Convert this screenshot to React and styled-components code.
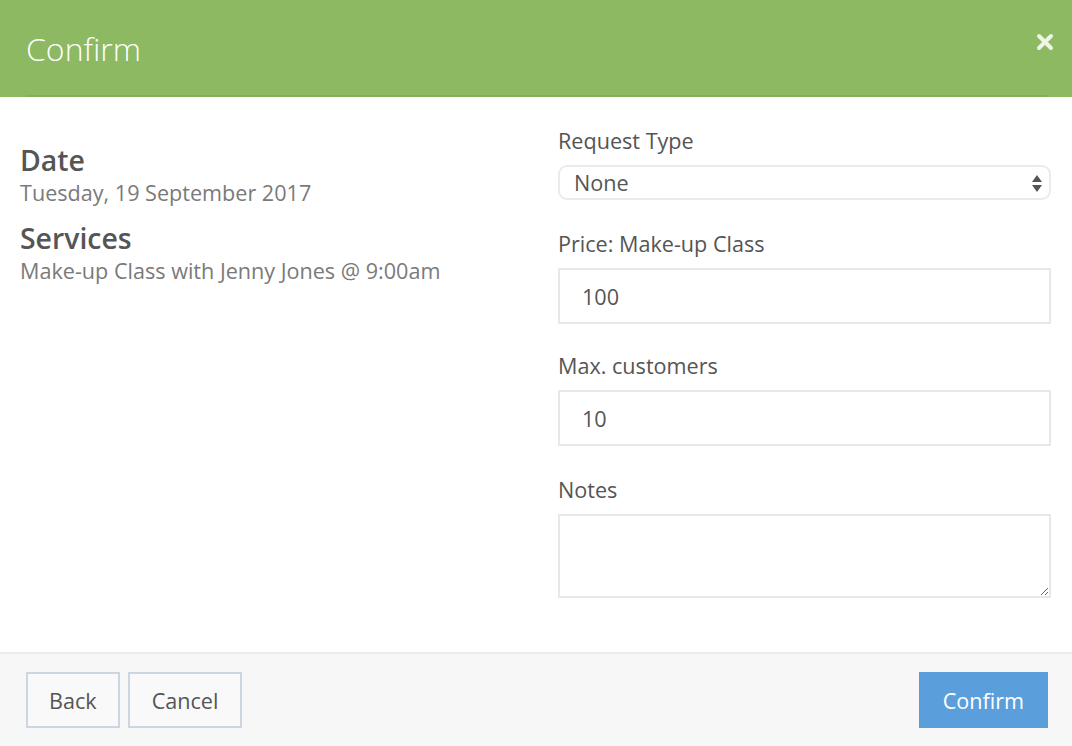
import React from "react";
import styled, { createGlobalStyle } from "styled-components";

const GlobalStyle = createGlobalStyle`
  html, body {
    margin: 0;
    padding: 0;
    background: #ffffff;
    font-family: "Open Sans", "Noto Sans", sans-serif;
  }
  * {
    box-sizing: border-box;
  }
`;

const Modal = styled.div`
  width: 1072px;
  height: 746px;
  display: flex;
  flex-direction: column;
  background: #ffffff;
  overflow: hidden;
`;

const Header = styled.div`
  background-color: #8cb962;
  height: 97px;
  padding: 0 24px 0 26px;
  position: relative;
`;

const HeaderInner = styled.div`
  height: 97px;
  display: flex;
  align-items: center;
  border-bottom: 2px solid #84b05b;
`;

const Title = styled.h1`
  margin: 0;
  font-size: 32px;
  font-weight: 300;
  color: #ffffff;
  padding-top: 1px;
`;

const CloseButton = styled.button`
  position: absolute;
  top: 32px;
  right: 17px;
  width: 20px;
  height: 20px;
  border: none;
  padding: 0;
  background: transparent;
  cursor: pointer;
  display: flex;
  align-items: center;
  justify-content: center;
`;

const Body = styled.div`
  flex: 1;
  display: grid;
  grid-template-columns: 1fr 493px;
  column-gap: 20px;
  padding: 31px 21px 0 20px;
`;

const Summary = styled.div`
  padding-top: 15px;
`;

const SummaryTitle = styled.h3`
  margin: 0;
  font-size: 28.4px;
  font-weight: 600;
  line-height: 34px;
  color: #555555;
`;

const SummaryText = styled.p`
  margin: 0 0 13px;
  font-size: 21.6px;
  line-height: 31px;
  color: #7a7a7a;
`;

const Field = styled.div`
  margin-bottom: ${(p) => p.$gap ?? 31}px;
`;

const Label = styled.label`
  display: block;
  font-size: 21.6px;
  line-height: 26px;
  color: #555555;
  margin-bottom: 11px;
`;

const SelectWrap = styled.div`
  position: relative;
`;

const Select = styled.select`
  appearance: none;
  -webkit-appearance: none;
  width: 100%;
  height: 35px;
  border: 2px solid #ebebeb;
  border-radius: 9px;
  background: #ffffff;
  padding: 0 14px;
  font-family: "Open Sans", sans-serif;
  font-size: 21.6px;
  color: #555555;
  outline: none;
`;

const Arrows = styled.svg`
  position: absolute;
  right: 8px;
  top: 9px;
  pointer-events: none;
`;

const Input = styled.input`
  width: 100%;
  height: 56px;
  border: 2px solid #e8e8e8;
  background: #ffffff;
  padding: 0 22px;
  font-family: "Open Sans", sans-serif;
  font-size: 21.6px;
  color: #555555;
  outline: none;
`;

const TextArea = styled.textarea`
  display: block;
  width: 100%;
  height: 84px;
  border: 2px solid #e8e8e8;
  background: #ffffff;
  padding: 12px 22px;
  font-family: "Open Sans", sans-serif;
  font-size: 21.6px;
  color: #555555;
  outline: none;
`;

const Footer = styled.div`
  height: 94px;
  border-top: 2px solid #ebebeb;
  background: #f7f7f7;
  display: flex;
  align-items: flex-start;
  justify-content: space-between;
  padding: 18px 24px 0 26px;
`;

const ButtonGroup = styled.div`
  display: flex;
  gap: 8px;
`;

const Button = styled.button`
  height: 56px;
  padding: 0 ${(p) => p.$pad || 21}px;
  font-family: "Open Sans", sans-serif;
  font-size: 21.6px;
  cursor: pointer;
  border: 2px solid ${(p) => (p.$primary ? "#5a9fdc" : "#ccd6e3")};
  background: ${(p) => (p.$primary ? "#5a9fdc" : "#f9f9f9")};
  color: ${(p) => (p.$primary ? "#ffffff" : "#555555")};
`;

const App = () => {
  return (
    <Modal>
      <GlobalStyle />
      <Header>
        <HeaderInner>
          <Title>Confirm</Title>
        </HeaderInner>
        <CloseButton aria-label="Close">
          <svg width="18" height="18" viewBox="0 0 18 18">
            <path
              d="M3 3 L15 15 M15 3 L3 15"
              stroke="#eef5e8"
              strokeWidth="4"
              strokeLinecap="round"
            />
          </svg>
        </CloseButton>
      </Header>
      <Body>
        <Summary>
          <SummaryTitle>Date</SummaryTitle>
          <SummaryText>Tuesday, 19 September 2017</SummaryText>
          <SummaryTitle>Services</SummaryTitle>
          <SummaryText>Make-up Class with Jenny Jones @ 9:00am</SummaryText>
        </Summary>
        <div>
          <Field>
            <Label>Request Type</Label>
            <SelectWrap>
              <Select defaultValue="none">
                <option value="none">None</option>
              </Select>
              <Arrows width="12" height="18" viewBox="0 0 12 18">
                <path d="M6 1 L11 8 L1 8 Z" fill="#555555" />
                <path d="M1 11 L11 11 L6 18 Z" fill="#555555" />
              </Arrows>
            </SelectWrap>
          </Field>
          <Field $gap={29}>
            <Label>Price: Make-up Class</Label>
            <Input defaultValue="100" />
          </Field>
          <Field $gap={31}>
            <Label>Max. customers</Label>
            <Input defaultValue="10" />
          </Field>
          <Field $gap={0}>
            <Label>Notes</Label>
            <TextArea />
          </Field>
        </div>
      </Body>
      <Footer>
        <ButtonGroup>
          <Button $pad={21}>Back</Button>
          <Button $pad={22}>Cancel</Button>
        </ButtonGroup>
        <Button $primary $pad={22}>Confirm</Button>
      </Footer>
    </Modal>
  );
};

export default App;
